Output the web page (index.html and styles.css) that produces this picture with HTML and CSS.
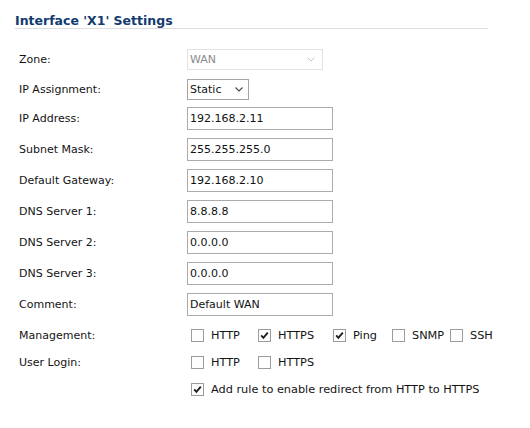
FILE: index.html
```html
<!DOCTYPE html>
<html>
<head>
<meta charset="utf-8">
<link rel="stylesheet" href="styles.css">
</head>
<body>
<div class="panel">
  <h1 class="title">Interface 'X1' Settings</h1>
  <div class="form">
    <div class="row row-zone">
      <span class="label">Zone:</span>
      <div class="select select-disabled select-zone"><span>WAN</span><svg width="8" height="5" viewBox="0 0 8 5"><polyline points="0.5,0.5 4,4 7.5,0.5" fill="none" stroke="#c4c4c4" stroke-width="1"/></svg></div>
    </div>
    <div class="row row-assign">
      <span class="label">IP Assignment:</span>
      <div class="select select-static"><span>Static</span><svg width="8" height="5" viewBox="0 0 8 5"><polyline points="0.5,0.5 4,4 7.5,0.5" fill="none" stroke="#444" stroke-width="1.1"/></svg></div>
    </div>
    <div class="row"><span class="label">IP Address:</span><div class="input">192.168.2.11</div></div>
    <div class="row"><span class="label">Subnet Mask:</span><div class="input">255.255.255.0</div></div>
    <div class="row"><span class="label">Default Gateway:</span><div class="input">192.168.2.10</div></div>
    <div class="row"><span class="label">DNS Server 1:</span><div class="input">8.8.8.8</div></div>
    <div class="row"><span class="label">DNS Server 2:</span><div class="input">0.0.0.0</div></div>
    <div class="row"><span class="label">DNS Server 3:</span><div class="input">0.0.0.0</div></div>
    <div class="row"><span class="label">Comment:</span><div class="input">Default WAN</div></div>
    <div class="row row-mgmt">
      <span class="label">Management:</span>
      <div class="checks">
        <label class="check w-http"><span class="cb"></span>HTTP</label>
        <label class="check w-https"><span class="cb"><svg width="11" height="11" viewBox="0 0 11 11"><polyline points="2.2,5.4 4.4,7.8 8.8,2.6" fill="none" stroke="#1e1e1e" stroke-width="1.9"/></svg></span>HTTPS</label>
        <label class="check w-ping"><span class="cb"><svg width="11" height="11" viewBox="0 0 11 11"><polyline points="2.2,5.4 4.4,7.8 8.8,2.6" fill="none" stroke="#1e1e1e" stroke-width="1.9"/></svg></span>Ping</label>
        <label class="check w-snmp"><span class="cb"></span>SNMP</label>
        <label class="check"><span class="cb"></span>SSH</label>
      </div>
    </div>
    <div class="row row-login">
      <span class="label">User Login:</span>
      <div class="checks">
        <label class="check w-http"><span class="cb"></span>HTTP</label>
        <label class="check"><span class="cb"></span>HTTPS</label>
      </div>
    </div>
    <div class="row row-redirect">
      <span class="label"></span>
      <div class="checks">
        <label class="check"><span class="cb"><svg width="11" height="11" viewBox="0 0 11 11"><polyline points="2.2,5.4 4.4,7.8 8.8,2.6" fill="none" stroke="#1e1e1e" stroke-width="1.9"/></svg></span>Add rule to enable redirect from HTTP to HTTPS</label>
      </div>
    </div>
  </div>
</div>
</body>
</html>
```
FILE: styles.css
```css
html, body {
  margin: 0;
  padding: 0;
  background: #ffffff;
}

body {
  font-family: "DejaVu Sans", Verdana, sans-serif;
  font-size: 11px;
  color: #141414;
}

.panel {
  width: 473px;
  margin-left: 15px;
}

.title {
  margin: 0;
  padding-top: 14px;
  height: 14px;
  line-height: 14px;
  font-size: 12.5px;
  font-weight: bold;
  color: #123b70;
  border-bottom: 1px solid #dedede;
  white-space: nowrap;
}

.form {
  margin-top: 15px;
  display: flex;
  flex-direction: column;
}

.row {
  display: flex;
  align-items: center;
  height: 31px;
}

.row-zone { height: 31px; }
.row-assign { height: 28px; }
.row-mgmt { height: 30px; }
.row-login { height: 24px; }
.row-redirect { height: 30px; }

.label {
  width: 168px;
  padding-left: 4px;
  flex: none;
  white-space: nowrap;
}

.input {
  box-sizing: border-box;
  width: 146px;
  height: 23px;
  border: 1px solid #ababab;
  padding-left: 2px;
  display: flex;
  align-items: center;
  color: #111;
  background: #fff;
}

.select {
  box-sizing: border-box;
  height: 21px;
  display: flex;
  align-items: center;
  justify-content: space-between;
  padding-left: 2px;
  background: #fff;
}

.select-zone {
  width: 136px;
  border: 1px solid #e2e2e2;
  padding-right: 7px;
}

.select-disabled span {
  color: #8a8a8a;
}

.select-static {
  width: 62px;
  border: 1px solid #a5a5a5;
  padding-right: 5px;
}

.select svg {
  display: block;
}

.checks {
  display: flex;
  align-items: center;
  padding-left: 4px;
}

.check {
  display: flex;
  align-items: center;
  white-space: nowrap;
  font-size: 11.3px;
}

.w-http { width: 67px; }
.w-https { width: 75px; }
.w-ping { width: 59px; }
.w-snmp { width: 58px; }

.cb {
  box-sizing: border-box;
  width: 13px;
  height: 13px;
  border: 1px solid #9c9c9c;
  background: #fdfdfd;
  margin-right: 7px;
  display: flex;
  align-items: center;
  justify-content: center;
  flex: none;
}

.cb svg {
  display: block;
}
```
